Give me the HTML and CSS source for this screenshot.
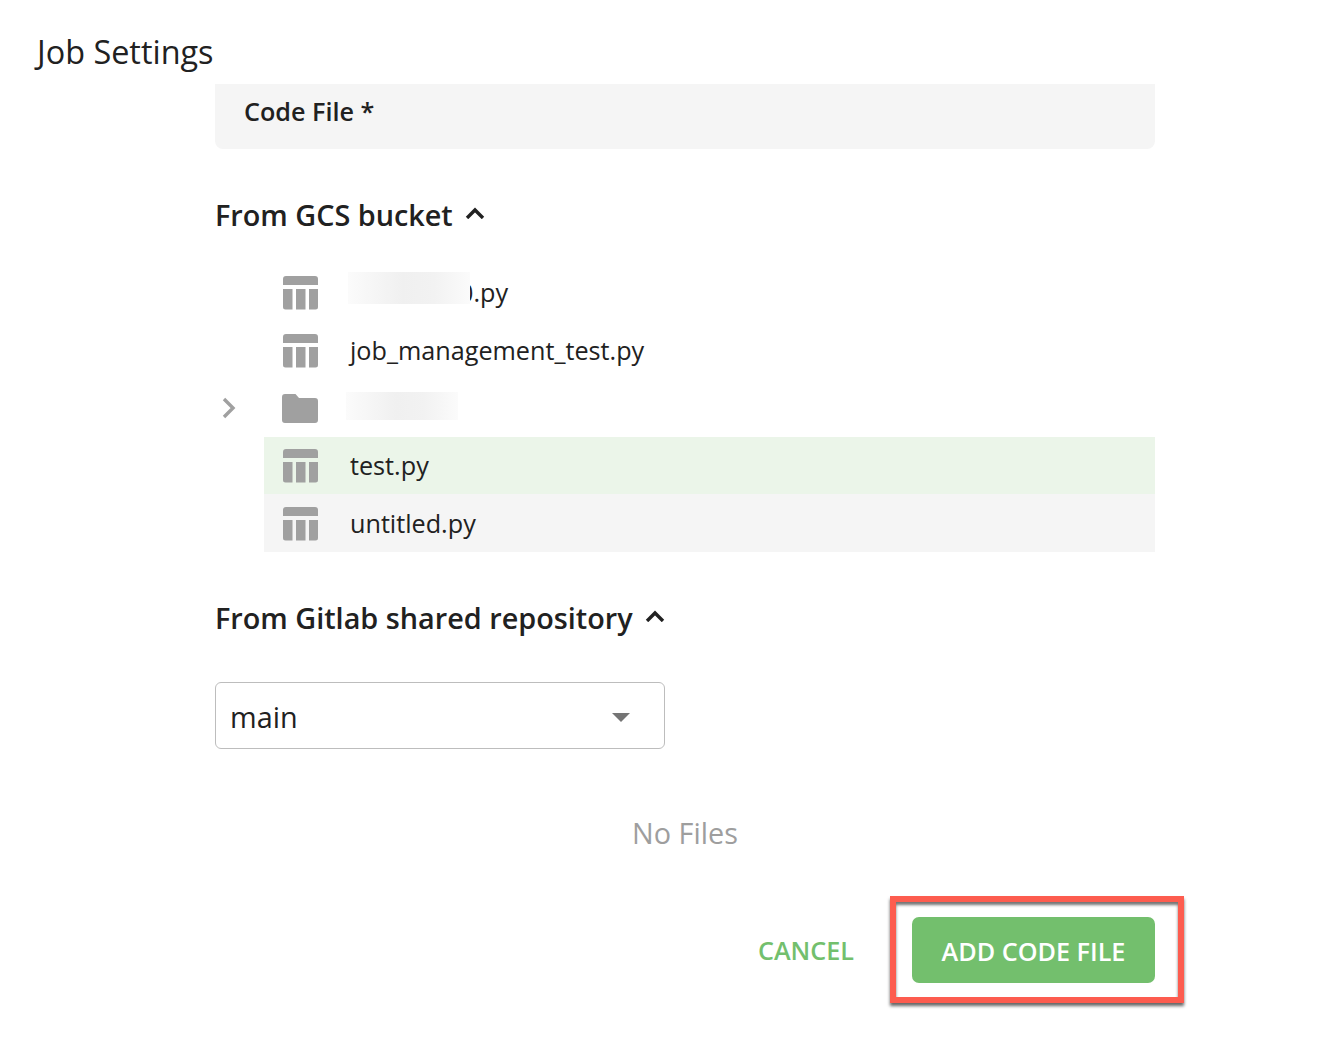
FILE: index.html
```html
<!DOCTYPE html>
<html lang="en">

<head>
	<meta charset="UTF-8">
	<title>Job Settings</title>
	<link rel="stylesheet" href="styles.css">
</head>

<body>
	<h1 class="page-title">Job Settings</h1>
	<div class="panel">
		<div class="panel-head">Code File *</div>

		<div class="section-title section-gcs">
			From GCS bucket
			<svg class="caret-up" viewBox="0 0 20 12"><path d="M2 11 L10 3 L18 11" /></svg>
		</div>

		<div class="tree">
			<div class="tree-row">
				<span class="arrow"></span>
				<svg class="file-icon" viewBox="0 0 35 34"><path d="M3 0H32A3 3 0 0 1 35 3V9H0V3A3 3 0 0 1 3 0ZM0 13H9.500V33.500H2.500A2.500 2.500 0 0 1 0 31ZM13 13H22.500V33.500H13ZM26 13H35V31A2.500 2.500 0 0 1 32.500 33.500H26Z" /></svg>
				<span class="file-name name-hidden">0.py<span class="blur blur-file"></span></span>
			</div>
			<div class="tree-row">
				<span class="arrow"></span>
				<svg class="file-icon" viewBox="0 0 35 34"><path d="M3 0H32A3 3 0 0 1 35 3V9H0V3A3 3 0 0 1 3 0ZM0 13H9.500V33.500H2.500A2.500 2.500 0 0 1 0 31ZM13 13H22.500V33.500H13ZM26 13H35V31A2.500 2.500 0 0 1 32.500 33.500H26Z" /></svg>
				<span class="file-name">job_management_test.py</span>
			</div>
			<div class="tree-row">
				<span class="arrow">
					<svg class="caret-right" viewBox="0 0 14 22"><path d="M2 2 L11 11 L2 20" /></svg>
				</span>
				<svg class="folder-icon" viewBox="0 0 36 29"><path d="M3 0H13.500L17 4H33A3 3 0 0 1 36 7V26A3 3 0 0 1 33 29H3A3 3 0 0 1 0 26V3A3 3 0 0 1 3 0Z" /></svg>
				<span class="blur blur-folder"></span>
			</div>
			<div class="tree-row selected">
				<span class="arrow"></span>
				<svg class="file-icon" viewBox="0 0 35 34"><path d="M3 0H32A3 3 0 0 1 35 3V9H0V3A3 3 0 0 1 3 0ZM0 13H9.500V33.500H2.500A2.500 2.500 0 0 1 0 31ZM13 13H22.500V33.500H13ZM26 13H35V31A2.500 2.500 0 0 1 32.500 33.500H26Z" /></svg>
				<span class="file-name">test.py</span>
			</div>
			<div class="tree-row hovered">
				<span class="arrow"></span>
				<svg class="file-icon" viewBox="0 0 35 34"><path d="M3 0H32A3 3 0 0 1 35 3V9H0V3A3 3 0 0 1 3 0ZM0 13H9.500V33.500H2.500A2.500 2.500 0 0 1 0 31ZM13 13H22.500V33.500H13ZM26 13H35V31A2.500 2.500 0 0 1 32.500 33.500H26Z" /></svg>
				<span class="file-name">untitled.py</span>
			</div>
		</div>

		<div class="section-title section-gitlab">
			From Gitlab shared repository
			<svg class="caret-up" viewBox="0 0 20 12"><path d="M2 11 L10 3 L18 11" /></svg>
		</div>

		<div class="branch-select">
			<span class="branch-name">main</span>
			<span class="select-arrow"></span>
		</div>

		<div class="no-files">No Files</div>

		<div class="actions">
			<button class="btn-cancel">CANCEL</button>
			<div class="add-wrap">
				<button class="btn-add">ADD CODE FILE</button>
				<div class="highlight-box"></div>
			</div>
		</div>
	</div>
</body>

</html>
```

FILE: styles.css
```css
body {
	margin: 0;
	background-color: #fff;
	color: #212121;
	font-family: "Open Sans", Arial, sans-serif;
}

.page-title {
	margin: 0;
	padding: 30px 0 0 37px;
	height: 54px;
	font-size: 32.4px;
	font-weight: 400;
	line-height: 43px;
}

.panel {
	width: 940px;
	margin-left: 215px;
	padding-bottom: 75px;
}

.panel-head {
	height: 65px;
	padding: 9px 0 0 29px;
	box-sizing: border-box;
	background-color: #f5f5f5;
	border-radius: 0 0 8px 8px;
	font-size: 25.2px;
	font-weight: 600;
	line-height: 36px;
}

.section-title {
	display: flex;
	align-items: center;
	gap: 12px;
	font-size: 28.8px;
	font-weight: 600;
	line-height: 38px;
}

.section-gcs {
	margin-top: 47px;
}

.section-gitlab {
	margin-top: 47px;
}

.caret-up {
	width: 20px;
	height: 12px;
	margin-bottom: 4px;
	fill: none;
	stroke: #212121;
	stroke-width: 3.4;
}

.tree {
	margin-top: 30px;
}

.tree-row {
	display: flex;
	align-items: center;
	height: 57.6px;
}

.arrow {
	display: flex;
	justify-content: center;
	width: 28px;
	margin-right: 38px;
}

.caret-right {
	width: 14px;
	height: 22px;
	margin-top: 1px;
	fill: none;
	stroke: #a0a0a0;
	stroke-width: 3.4;
}

.file-icon {
	width: 35px;
	height: 34px;
	margin: 1px 0 0 2px;
	fill: #a0a0a0;
}

.folder-icon {
	width: 36px;
	height: 29px;
	margin: 2px 0 0 1px;
	fill: #a0a0a0;
}

.file-name {
	position: relative;
	margin: -1px 0 0 32px;
	font-size: 25.2px;
	line-height: 34px;
}

.name-hidden {
	padding-left: 109px;
}

.blur {
	display: block;
	background: linear-gradient(90deg, #fbfbfb, #f0f0f0 45%, #f2f2f2 70%, #fbfbfb);
}

.blur-file {
	position: absolute;
	left: -2px;
	top: -3px;
	width: 122px;
	height: 32px;
}

.blur-folder {
	width: 112px;
	height: 28px;
	margin: -4px 0 0 28px;
}

.selected,
.hovered {
	margin-left: 49px;
}

.selected .arrow,
.hovered .arrow {
	width: 0;
	margin-right: 17px;
}

.selected {
	background-color: #ebf5e9;
}

.hovered {
	background-color: #f5f5f5;
}

.branch-select {
	display: flex;
	justify-content: space-between;
	align-items: center;
	box-sizing: border-box;
	width: 450px;
	height: 67px;
	margin-top: 45px;
	padding: 0 34px 0 14px;
	border: 1px solid #bdbdbd;
	border-radius: 6px;
	font-size: 28.8px;
}

.branch-name {
	padding-top: 2px;
}

.select-arrow {
	width: 0;
	height: 0;
	margin-top: 5px;
	border-left: 9px solid transparent;
	border-right: 9px solid transparent;
	border-top: 9px solid #757575;
}

.no-files {
	margin-top: 65px;
	text-align: center;
	color: #9e9e9e;
	font-size: 28.8px;
	line-height: 38px;
}

.actions {
	display: flex;
	justify-content: flex-end;
	align-items: center;
	gap: 58px;
	margin-top: 65px;
}

button {
	border: none;
	font-family: inherit;
	font-weight: 600;
	font-size: 25.2px;
}

.btn-cancel {
	padding: 1px 0 0;
	background: none;
	color: #73bf6d;
}

.add-wrap {
	position: relative;
}

.btn-add {
	display: block;
	width: 243px;
	height: 66px;
	padding-top: 4px;
	border-radius: 7px;
	background-color: #73bf6d;
	color: #fff;
}

.highlight-box {
	position: absolute;
	left: -22px;
	top: -21px;
	right: -29px;
	bottom: -20px;
	border: 6px solid #fd5c4f;
	box-shadow: 0 3px 3px rgba(0, 0, 0, 0.6), inset 0 3px 3px rgba(0, 0, 0, 0.55);
}
```
